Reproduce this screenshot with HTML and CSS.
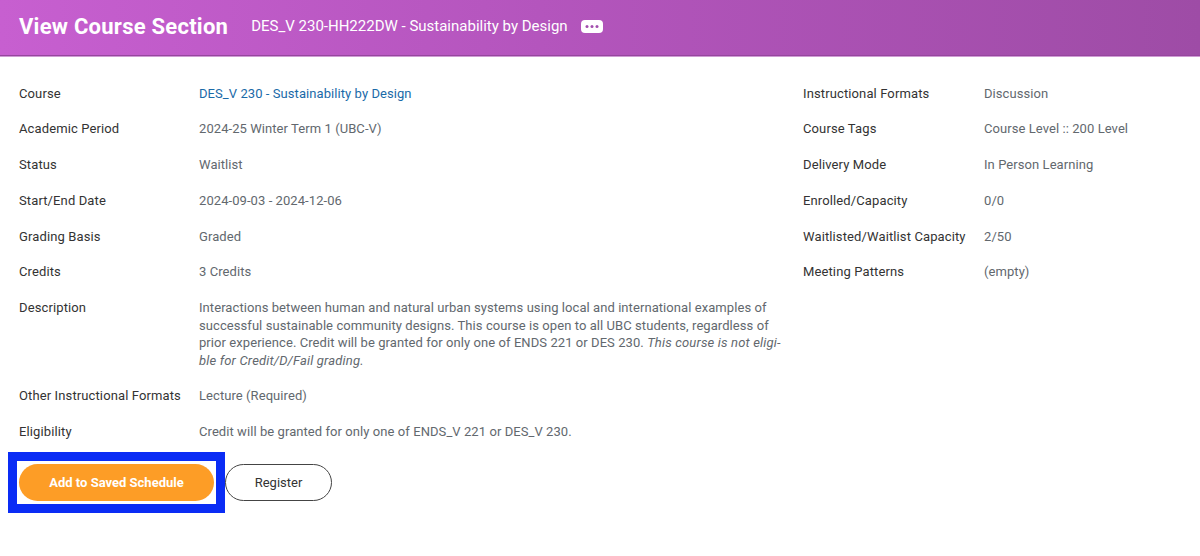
FILE: index.html
```html
<!DOCTYPE html>
<html lang="en">
<head>
    <meta charset="UTF-8">
    <meta name="viewport" content="width=device-width, initial-scale=1.0">
    <title>View Course Section</title>
    <link rel="stylesheet" href="styles.css">
</head>
<body>
    <header class="page-header">
        <h1>View Course Section</h1>
        <span class="subtitle">DES_V 230-HH222DW - Sustainability by Design</span>
        <button type="button" class="more-btn" aria-label="More">
            <svg width="22" height="13" viewBox="0 0 22 13">
                <rect x="0" y="0" width="22" height="13" rx="4" fill="#fff"/>
                <circle cx="6" cy="6.5" r="1.5" fill="#a24fae"/>
                <circle cx="11" cy="6.5" r="1.5" fill="#a24fae"/>
                <circle cx="16" cy="6.5" r="1.5" fill="#a24fae"/>
            </svg>
        </button>
    </header>

    <main class="details">
        <div class="col-left">
            <div class="field"><div class="label">Course</div><div class="value"><a href="#">DES_V 230 - Sustainability by Design</a></div></div>
            <div class="field"><div class="label">Academic Period</div><div class="value">2024-25 Winter Term 1 (UBC-V)</div></div>
            <div class="field"><div class="label">Status</div><div class="value">Waitlist</div></div>
            <div class="field"><div class="label">Start/End Date</div><div class="value">2024-09-03 - 2024-12-06</div></div>
            <div class="field"><div class="label">Grading Basis</div><div class="value">Graded</div></div>
            <div class="field"><div class="label">Credits</div><div class="value">3 Credits</div></div>
            <div class="field field-long"><div class="label">Description</div><div class="value description">Interactions between human and natural urban systems using local and international examples of<br>successful sustainable community designs. This course is open to all UBC students, regardless of<br>prior experience. Credit will be granted for only one of ENDS 221 or DES 230. <em>This course is not eligi-<br>ble for Credit/D/Fail grading.</em></div></div>
            <div class="field"><div class="label">Other Instructional Formats</div><div class="value">Lecture (Required)</div></div>
            <div class="field"><div class="label">Eligibility</div><div class="value">Credit will be granted for only one of ENDS_V 221 or DES_V 230.</div></div>
        </div>
        <div class="col-right">
            <div class="field"><div class="label">Instructional Formats</div><div class="value">Discussion</div></div>
            <div class="field"><div class="label">Course Tags</div><div class="value">Course Level :: 200 Level</div></div>
            <div class="field"><div class="label">Delivery Mode</div><div class="value">In Person Learning</div></div>
            <div class="field"><div class="label">Enrolled/Capacity</div><div class="value">0/0</div></div>
            <div class="field"><div class="label">Waitlisted/Waitlist Capacity</div><div class="value">2/50</div></div>
            <div class="field"><div class="label">Meeting Patterns</div><div class="value">(empty)</div></div>
        </div>
    </main>

    <div class="actions">
        <div class="highlight">
            <button type="button" class="btn btn-primary">Add to Saved Schedule</button>
        </div>
        <button type="button" class="btn btn-outline">Register</button>
    </div>
</body>
</html>
```

FILE: styles.css
```css
body {
    font-family: Roboto, "Liberation Sans", sans-serif;
    font-size: 13px;
    margin: 0;
    background: #fff;
    color: #333;
}
.page-header {
    height: 56px;
    display: flex;
    align-items: center;
    padding: 0 0 3px 19px;
    box-sizing: border-box;
    background: linear-gradient(90deg, #c75fd0 0%, #b455bd 45%, #9e4ca6 100%);
    border-bottom: 1px solid #96469e;
    box-shadow: 0 1px 0 #cf9bd4;
    color: #fff;
}
.page-header h1 {
    font-size: 22px;
    font-weight: 700;
    letter-spacing: 0.25px;
    margin: 0 23px 0 0;
}
.subtitle {
    font-size: 15px;
}
.more-btn {
    background: none;
    border: none;
    padding: 0;
    margin-left: 13px;
    display: flex;
}
.details {
    display: grid;
    grid-template-columns: 784px 1fr;
    padding: 19.7px 0 0 19px;
}
.field {
    display: grid;
    grid-template-columns: 180px 1fr;
    padding: 10px 0;
    line-height: 15.7px;
}
.field-long {
    padding-bottom: 7.6px;
}
.col-right .field {
    grid-template-columns: 181px 1fr;
}
.label {
    color: #333;
    letter-spacing: 0.12px;
}
.value {
    color: #62686e;
    letter-spacing: 0.07px;
}
.value a {
    color: #1a6aa8;
    text-decoration: none;
}
.description {
    line-height: 17.6px;
    margin-top: -1px;
    margin-bottom: 1px;
}
.description em {
    letter-spacing: 0.17px;
}
.actions {
    display: flex;
    align-items: center;
    margin: 3px 0 0 8px;
}
.highlight {
    border: 9px solid #0a2cf5;
    padding: 3px 2px;
    display: flex;
}
.btn {
    font-family: inherit;
    font-size: 13px;
    height: 37px;
    border-radius: 19px;
    cursor: pointer;
}
.btn-primary {
    width: 195px;
    background-color: #fd9d26;
    border: none;
    color: #fff;
    font-weight: 700;
}
.btn-outline {
    width: 107px;
    background: #fff;
    border: 1px solid #444;
    color: #333;
}
```
